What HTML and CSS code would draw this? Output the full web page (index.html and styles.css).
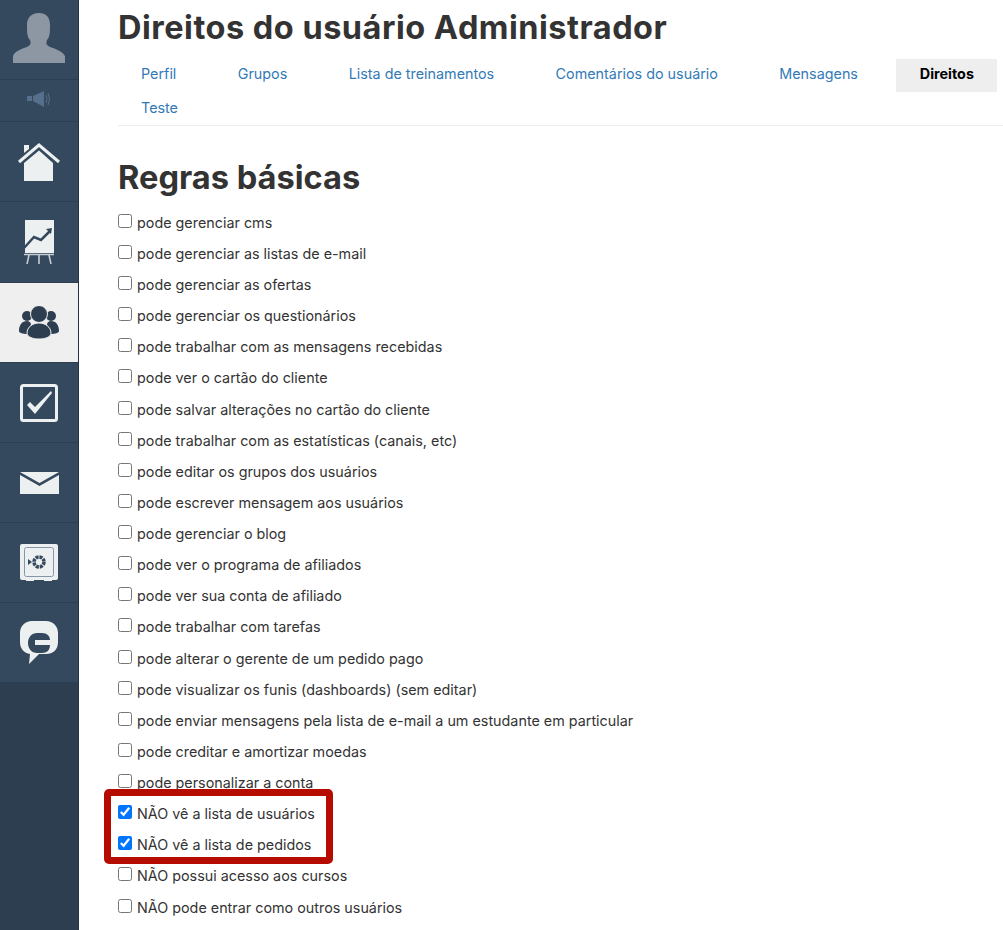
FILE: index.html
```html
<!DOCTYPE html>
<html lang="pt">
<head>
<meta charset="utf-8">
<title>Direitos do usuário Administrador</title>
<link rel="stylesheet" href="styles.css">
</head>
<body>
<div class="app">
  <nav class="sidebar">
    <a class="item item-avatar">
      <svg class="ico-avatar" viewBox="0 0 52 50"><path fill="#8d97a3" d="M0 50V43C2 38 8 36 14 34C18 32 18 30 17 27C14 24 14 19 14 12C14 4 19 0 26 0C33 0 37 4 37 12C37 19 37 24 34 27C33 30 33 32 37 34C43 36 49 38 52 43V50Z"/></svg>
    </a>
    <a class="item item-sound">
      <svg class="ico-sound" viewBox="0 0 26 18"><path fill="#566f8c" d="M1 6H6V11H1ZM7 6L18 1V17L7 11Z"/><path fill="none" stroke="#566f8c" d="M20 5Q22 9 20 13M22 3Q25 9 22 15"/></svg>
    </a>
    <a class="item">
      <svg class="ico-home" viewBox="0 0 42 38"><path fill="#ecf0f1" d="M6 20L21 7.500L35 20V38H6Z"/><path fill="#ecf0f1" d="M6 2H11V6L6 10Z"/><path fill="none" stroke="#ecf0f1" stroke-width="3" d="M1 19L21 2L41 19"/></svg>
    </a>
    <a class="item item-tall">
      <svg class="ico-chart" viewBox="0 0 30 44"><path fill="#ecf0f1" d="M1 0H30V33H1Z"/><path fill="none" stroke="#34495e" stroke-width="2.500" d="M0 28L10 17L17 20L26 11"/><path fill="#34495e" d="M22 9L28 8L27 14Z"/><path fill="none" stroke="#c5ccd2" stroke-width="1.6" d="M0 34.500H30M5 35L3 44M15 35V44M25 35L27 44"/></svg>
    </a>
    <a class="item active">
      <svg class="ico-users" viewBox="0 0 40 33"><g fill="#2c3e50"><circle cx="8" cy="10" r="5"/><circle cx="32" cy="10" r="5"/><path d="M0 25C0 19 3 15 8 15C10 15 12 16 12 19C9 22 8 25 8 28C4 28 0 27 0 25Z"/><path d="M40 25C40 19 37 15 32 15C30 15 28 16 28 19C31 22 32 25 32 28C36 28 40 27 40 25Z"/><circle cx="20" cy="8" r="8.500" stroke="#efefef"/><path stroke="#efefef" d="M8 27C8 21 14 17 20 17C26 17 32 21 32 27C32 31 26 33 20 33C14 33 8 31 8 27Z"/></g></svg>
    </a>
    <a class="item">
      <svg class="ico-box" viewBox="0 0 38 38"><rect x="1.500" y="1.500" width="35" height="35" rx="2" fill="none" stroke="#ecf0f1" stroke-width="3"/><path fill="#ecf0f1" d="M7 21L10 18L15 23L31 7L32 9L15 30Z"/></svg>
    </a>
    <a class="item">
      <svg class="ico-mail" viewBox="0 0 39 22"><path fill="#ecf0f1" d="M0 0H39L19.500 11ZM0 3L19.500 14L39 3V22H0Z"/></svg>
    </a>
    <a class="item">
      <svg class="ico-box" viewBox="0 0 38 38"><path fill="#ecf0f1" d="M2 0H36Q38 0 38 2V34Q38 36 36 36H32V37H24V36H14V37H6V36H2Q0 36 0 34V2Q0 0 2 0Z"/><rect x="4.500" y="3.500" width="29" height="29" rx="2" fill="none" stroke="#8496a8"/><circle cx="19" cy="18" r="5" fill="none" stroke="#34495e" stroke-width="3.500" stroke-dasharray="3 .9"/><path fill="#34495e" d="M8 15L12 18L8 21Z"/></svg>
    </a>
    <a class="item">
      <svg class="ico-chat" viewBox="0 0 38 43"><path fill="#ecf0f1" d="M12 0H26C33 0 38 5 38 12V21C38 29 33 33 26 33H19L9 43L10 33C4 32 0 28 0 21V12C0 5 5 0 12 0Z"/><path fill="#34495e" d="M17 12H22C27 12 30 15 30 19H15V24H30C30 29 27 32 22 32H17C12 32 8 28 8 22C8 16 12 12 17 12Z"/></svg>
    </a>
  </nav>
  <main class="main">
    <h1 class="title">Direitos do usuário Administrador</h1>
    <ul class="tabs">
      <li class="tab">Perfil</li>
      <li class="tab">Grupos</li>
      <li class="tab">Lista de treinamentos</li>
      <li class="tab">Comentários do usuário</li>
      <li class="tab">Mensagens</li>
      <li class="tab tab-active">Direitos</li>
      <li class="tab">Teste</li>
    </ul>
    <h2 class="section">Regras básicas</h2>
    <div class="rules">
      <label class="rule"><input type="checkbox">pode gerenciar cms</label>
      <label class="rule"><input type="checkbox">pode gerenciar as listas de e-mail</label>
      <label class="rule"><input type="checkbox">pode gerenciar as ofertas</label>
      <label class="rule"><input type="checkbox">pode gerenciar os questionários</label>
      <label class="rule"><input type="checkbox">pode trabalhar com as mensagens recebidas</label>
      <label class="rule"><input type="checkbox">pode ver o cartão do cliente</label>
      <label class="rule"><input type="checkbox">pode salvar alterações no cartão do cliente</label>
      <label class="rule"><input type="checkbox">pode trabalhar com as estatísticas (canais, etc)</label>
      <label class="rule"><input type="checkbox">pode editar os grupos dos usuários</label>
      <label class="rule"><input type="checkbox">pode escrever mensagem aos usuários</label>
      <label class="rule"><input type="checkbox">pode gerenciar o blog</label>
      <label class="rule"><input type="checkbox">pode ver o programa de afiliados</label>
      <label class="rule"><input type="checkbox">pode ver sua conta de afiliado</label>
      <label class="rule"><input type="checkbox">pode trabalhar com tarefas</label>
      <label class="rule"><input type="checkbox">pode alterar o gerente de um pedido pago</label>
      <label class="rule"><input type="checkbox">pode visualizar os funis (dashboards) (sem editar)</label>
      <label class="rule"><input type="checkbox">pode enviar mensagens pela lista de e-mail a um estudante em particular</label>
      <label class="rule"><input type="checkbox">pode creditar e amortizar moedas</label>
      <label class="rule"><input type="checkbox">pode personalizar a conta</label>
      <label class="rule"><input type="checkbox" checked>NÃO vê a lista de usuários</label>
      <label class="rule"><input type="checkbox" checked>NÃO vê a lista de pedidos</label>
      <label class="rule"><input type="checkbox">NÃO possui acesso aos cursos</label>
      <label class="rule"><input type="checkbox">NÃO pode entrar como outros usuários</label>
      <div class="highlight"></div>
    </div>
  </main>
</div>
</body>
</html>
```
FILE: styles.css
```css
* { box-sizing: border-box; }
html, body { margin: 0; height: 100%; overflow: hidden; background: #fff; }
body { font-family: "Inter", "Lato", sans-serif; color: #333; }
.app { display: flex; height: 930px; overflow: hidden; }
.sidebar { flex: 0 0 79px; width: 79px; background: #2c3e50; border-right: 1px solid #243342; display: flex; flex-direction: column; }
.item { height: 80px; flex: none; display: flex; align-items: center; justify-content: center; background: #34495e; border-bottom: 1px solid #2c3e50; }
.item-avatar { align-items: flex-end; padding-bottom: 16px; }
.item-sound { height: 42px; padding-bottom: 3px; }
.item-tall { height: 81px; }
.item.active { background: #efefef; }
.ico-home { width: 42px; height: 38px; }
.ico-chart { width: 30px; height: 44px; }
.ico-users { width: 40px; height: 33px; }
.ico-box { width: 38px; height: 38px; }
.ico-avatar { width: 52px; height: 50px; }
.ico-sound { width: 26px; height: 18px; }
.ico-mail { width: 39px; height: 22px; }
.ico-chat { width: 38px; height: 43px; }
.main { flex: 1; min-width: 0; padding: 0 0 0 39px; }
.title { margin: 0; padding-top: 8px; font-size: 32.5px; line-height: 40px; font-weight: 700; color: #333; white-space: nowrap; letter-spacing: 0.5px; }
.tabs { list-style: none; margin: 11px 0 0; padding: 0; display: flex; flex-wrap: wrap; column-gap: 15.4px; border-bottom: 1px solid #eee; height: 67px; }
.tab { height: 33px; padding: 0 23px; font-size: 14.35px; line-height: 30px; color: #337ab7; white-space: nowrap; margin-bottom: 1px; }
.tab-active { background: #eee; color: #000; font-weight: 700; padding: 0 23.500px; }
.section { margin: 0; padding-top: 30px; font-size: 32.6px; line-height: 42px; font-weight: 700; color: #333; }
.rules { position: relative; margin-top: 13.8px; display: flex; flex-direction: column; }
.rule { display: flex; align-items: flex-start; height: 31.125px; font-size: 14.35px; line-height: 21px; color: #333; white-space: nowrap; }
.rule input { margin: 2px 5px 0 0; flex: none; width: 14px; height: 14px; }
.highlight { position: absolute; left: -14.500px; top: 577px; width: 229.500px; height: 75px; border: 7px solid #b60c00; border-radius: 5px; pointer-events: none; }
```
